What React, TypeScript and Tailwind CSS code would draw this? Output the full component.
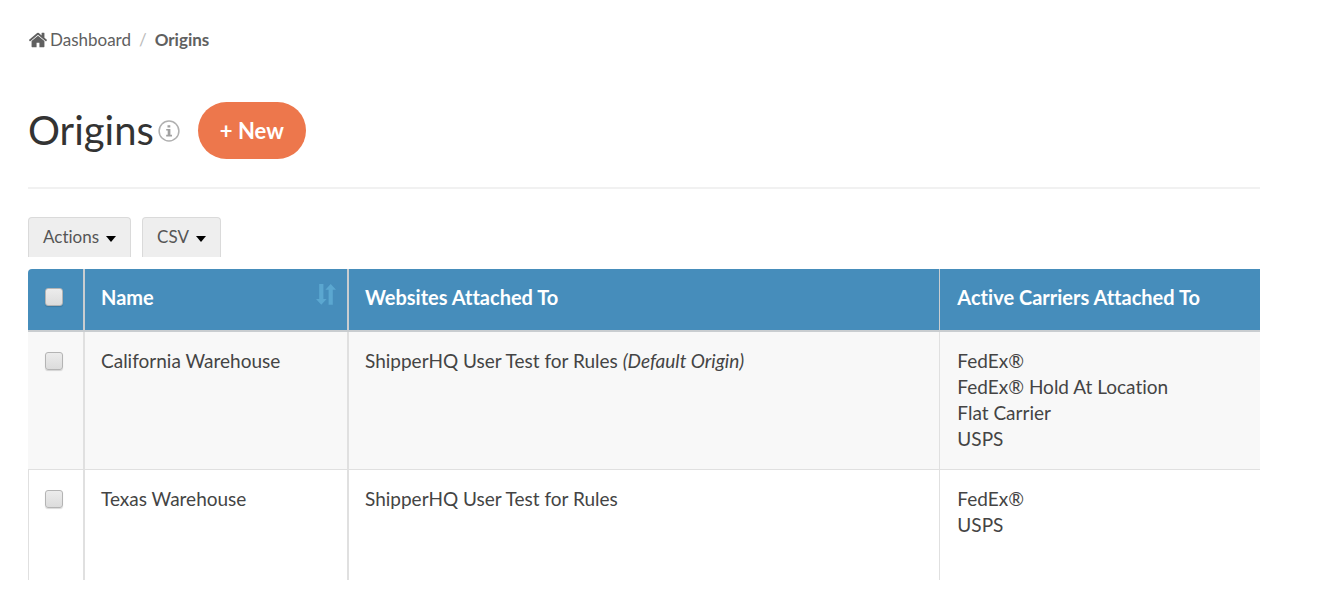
import React, { useState } from 'react';
import { clsx } from 'clsx';

interface Origin {
  name: string;
  website: string;
  isDefault?: boolean;
  carriers: string[];
}

const ORIGINS: Origin[] = [
  {
    name: 'California Warehouse',
    website: 'ShipperHQ User Test for Rules',
    isDefault: true,
    carriers: ['FedEx®', 'FedEx® Hold At Location', 'Flat Carrier', 'USPS'],
  },
  {
    name: 'Texas Warehouse',
    website: 'ShipperHQ User Test for Rules',
    carriers: ['FedEx®', 'USPS'],
  },
];

function HomeIcon() {
  return (
    <svg viewBox="0 0 1792 1792" className="size-5 fill-current" aria-hidden="true">
      <path d="M1472 992v480q0 26-19 45t-45 19h-384v-384h-256v384h-384q-26 0-45-19t-19-45v-480q0-1 .5-3t.5-3l575-474 575 474q1 2 1 6zm223-69l-62 74q-8 9-21 11h-3q-13 0-21-7l-692-577-692 577q-12 8-24 7-13-2-21-11l-62-74q-8-10-7-23.5t11-21.5l719-599q32-26 76-26t76 26l244 204v-195q0-14 9-23t23-9h192q14 0 23 9t9 23v408l219 182q10 8 11 21.5t-7 23.5z" />
    </svg>
  );
}

function InfoIcon() {
  return (
    <svg viewBox="0 0 22 22" className="size-[22px]" aria-hidden="true">
      <circle cx="11" cy="11" r="9.9" fill="none" stroke="#b0b0b0" strokeWidth="1.5" />
      <path
        d="M9.5 5.3h2.8v2.2H9.5zM8.2 8.9h4.2v5.8h1.6v1.7H8.2v-1.7h1.5v-4.1H8.2z"
        fill="#a0a0a0"
      />
    </svg>
  );
}

function SortIcon() {
  return (
    <svg viewBox="0 0 20 21" className="h-[21px] w-5 fill-[#5ba7d0]" aria-hidden="true">
      <path d="M3.2 0h4.2v15h3.2L5.3 20.8 0 15h3.2z" />
      <path d="M12.6 20.8h4.2v-15H20L14.7 0 9.4 5.8h3.2z" />
    </svg>
  );
}

function Checkbox({ label, checked, onChange }: { label: string; checked: boolean; onChange: () => void }) {
  return (
    <input
      type="checkbox"
      aria-label={label}
      checked={checked}
      onChange={onChange}
      className="mt-1 block size-[18px] appearance-none rounded-[3px] border border-[#b4b4b4] bg-linear-to-b from-[#ececec] to-[#dcdcdc] shadow-[0_1px_1px_rgba(0,0,0,0.15)] checked:from-[#7fb4d8] checked:to-[#468dbb]"
    />
  );
}

function MenuButton({ children }: { children: React.ReactNode }) {
  return (
    <button
      type="button"
      aria-haspopup="menu"
      className="flex h-10 items-center gap-[7px] rounded-t border border-b-0 border-[#dadada] bg-[#eeeeee] px-[14px] pb-[2px] text-[17px] text-[#555555]"
    >
      {children}
      <svg viewBox="0 0 10 6" className="mt-1 h-[6px] w-[10px] fill-black" aria-hidden="true">
        <path d="M0 0h10L5 6z" />
      </svg>
    </button>
  );
}

export default function App() {
  const [selected, setSelected] = useState<string[]>([]);
  const allSelected = selected.length === ORIGINS.length;

  const toggle = (name: string) => {
    setSelected(selected.includes(name) ? selected.filter((n) => n !== name) : [...selected, name]);
  };

  return (
    <main className="bg-white pt-7 pr-[58px] pb-[14px] pl-7 font-[Lato,sans-serif] text-[#444444] [font-variant-ligatures:none]">
      <nav aria-label="Breadcrumb" className="flex h-6 items-center text-[17px] text-[#606060]">
        <a href="#dashboard" className="flex items-center gap-[2px]">
          <HomeIcon />
          Dashboard
        </a>
        <span className="px-2 text-[#bbbbbb]">/</span>
        <span className="font-bold">Origins</span>
      </nav>

      <header className="mt-[50px] flex items-center border-b-2 border-[#f1f1f1] pb-7">
        <h1 className="text-[40px] leading-[57px] text-[#333333]">Origins</h1>
        <button type="button" aria-label="About origins" className="ml-1">
          <InfoIcon />
        </button>
        <button
          type="button"
          className="ml-[18px] h-[57px] rounded-full bg-[#ed774c] px-[22px] text-[22px] font-bold text-white"
        >
          + New
        </button>
      </header>

      <div className="mt-7 flex gap-[11px]">
        <MenuButton>Actions</MenuButton>
        <MenuButton>CSV</MenuButton>
      </div>

      <table className="mt-3 w-full table-fixed border-separate border-spacing-0 text-left text-[19px] leading-[26px]">
        <colgroup>
          <col className="w-[57px]" />
          <col className="w-[264px]" />
          <col className="w-[48%]" />
          <col />
        </colgroup>
        <thead>
          <tr className="h-[63px] bg-[#468dbb] align-top text-xl leading-[26px] text-white [&>th]:border-b-2 [&>th]:border-[#c9cdd0] [&>th]:pt-[15px]">
            <th className="rounded-tl-[4px] border-r-2 pl-[17px]">
              <Checkbox
                label="Select all origins"
                checked={allSelected}
                onChange={() => setSelected(allSelected ? [] : ORIGINS.map((o) => o.name))}
              />
            </th>
            <th className="border-r-2 pr-[11px] pl-4 font-bold">
              <div className="flex items-start justify-between">
                Name
                <button type="button" aria-label="Sort by name">
                  <SortIcon />
                </button>
              </div>
            </th>
            <th className="border-r pl-4 font-bold">Websites Attached To</th>
            <th className="pl-[17px] font-bold">Active Carriers Attached To</th>
          </tr>
        </thead>
        <tbody>
          {ORIGINS.map((origin, idx) => (
            <tr
              key={origin.name}
              className={clsx(
                'align-top [&>td]:border-[#e0e0e0] [&>td]:pt-4',
                idx % 2 === 0 ? 'h-[138px] bg-[#f8f8f8] [&>td]:border-b' : 'h-[110px] bg-white'
              )}
            >
              <td className={clsx('border-r-2', idx % 2 === 0 ? 'pl-[17px]' : 'border-l pl-4')}>
                <Checkbox
                  label={`Select ${origin.name}`}
                  checked={selected.includes(origin.name)}
                  onChange={() => toggle(origin.name)}
                />
              </td>
              <td className="border-r-2 pl-4">{origin.name}</td>
              <td className="border-r pl-4">
                {origin.website} {origin.isDefault && <em>(Default Origin)</em>}
              </td>
              <td className="pl-[17px]">
                <ul>
                  {origin.carriers.map((carrier) => (
                    <li key={carrier}>{carrier}</li>
                  ))}
                </ul>
              </td>
            </tr>
          ))}
        </tbody>
      </table>
    </main>
  );
}
